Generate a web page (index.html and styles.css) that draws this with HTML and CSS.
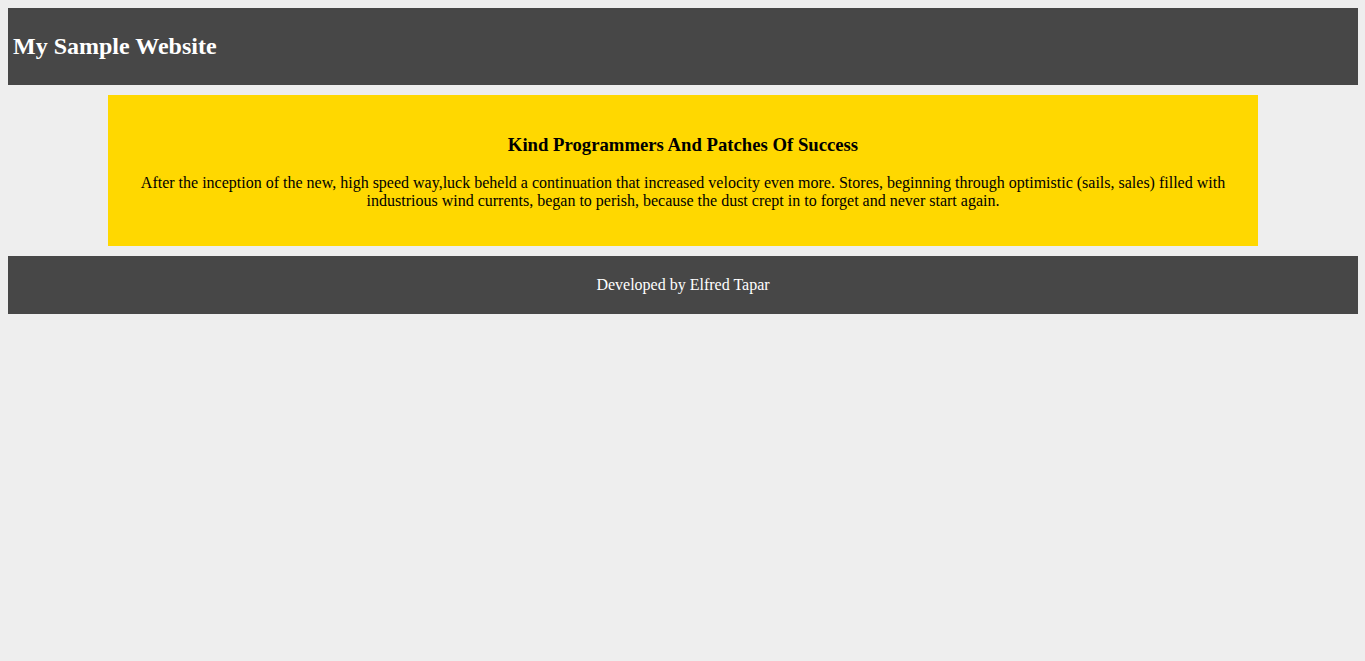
FILE: index.html
```html
<!DOCTYPE html>
<html>
<head>
<meta charset="utf-8">
<title>My Sample Website</title>
<link rel="stylesheet" href="styles.css">
</head>
<body>
<header class="site-header">
  <h2 class="site-title">My Sample Website</h2>
</header>
<main class="content">
  <h3 class="content-title">Kind Programmers And Patches Of Success</h3>
  <p class="content-text">After the inception of the new, high speed way,luck beheld a continuation that increased velocity even more. Stores, beginning through optimistic (sails, sales) filled with industrious wind currents, began to perish, because the dust crept in to forget and never start again.</p>
</main>
<footer class="site-footer">
  <p class="footer-text">Developed by Elfred Tapar</p>
</footer>
</body>
</html>
```
FILE: styles.css
```css
html, body {
  background: #eeeeee;
}
body {
  margin: 8px 7px 8px 8px;
  font-family: "Liberation Serif", "Times New Roman", serif;
  font-size: 16px;
  color: #000;
}
.site-header {
  background: #474747;
  padding: 5px;
}
.site-title {
  color: #ffffff;
  font-size: 24px;
  font-weight: bold;
  margin: 19.92px 0;
}
.content {
  display: block;
  background: #ffd800;
  margin: 10px 100px;
  padding: 20px;
  text-align: center;
}
.content-title {
  font-size: 18.72px;
  margin: 18.72px 0;
}
.content-text {
  margin: 16px 0;
}
.site-footer {
  background: #474747;
  padding: 20px;
  text-align: center;
}
.footer-text {
  color: #ffffff;
  margin: 0;
}
```
